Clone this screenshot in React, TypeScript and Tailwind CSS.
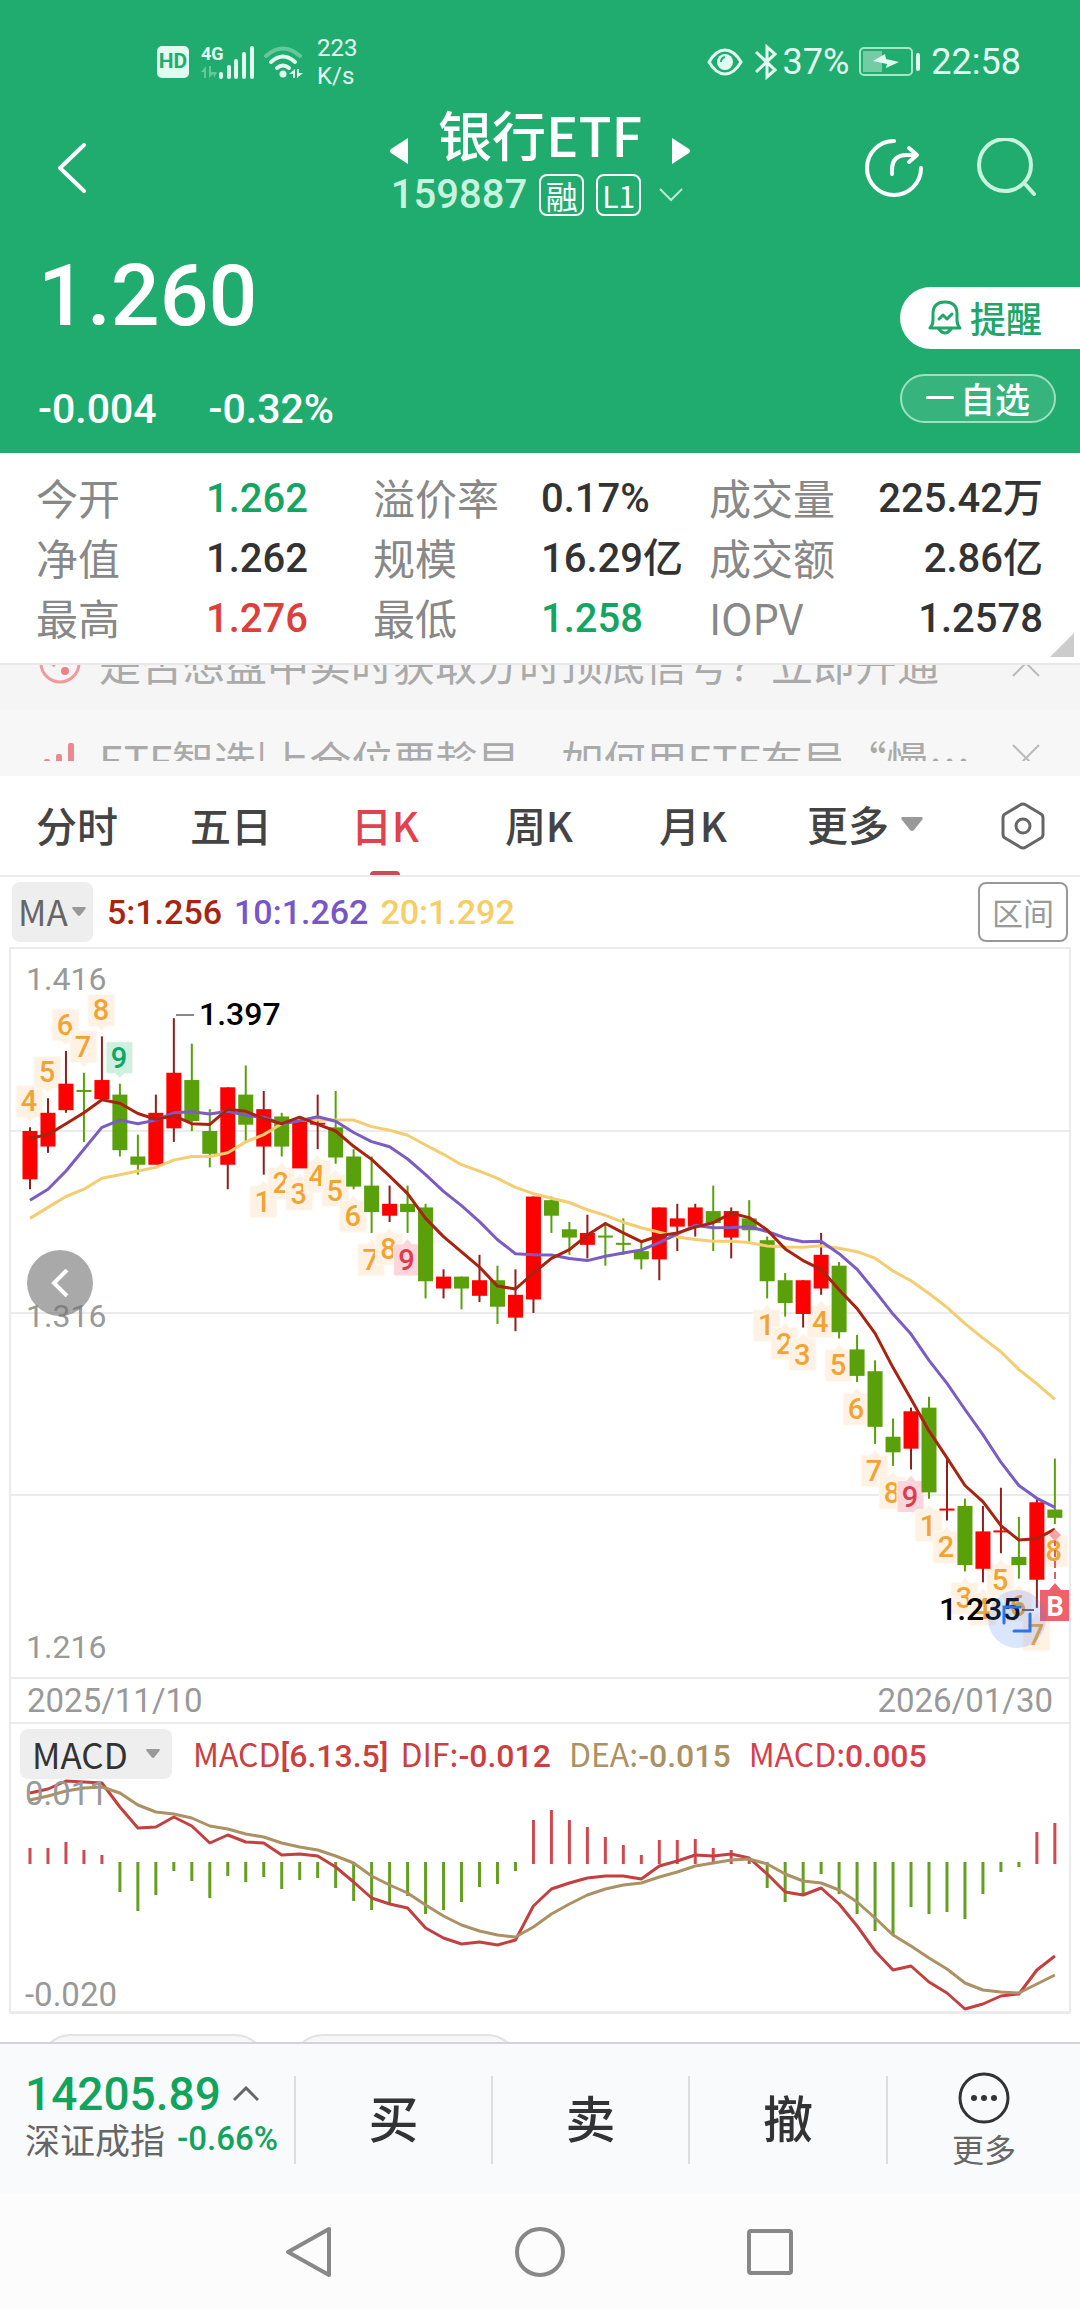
import { useState } from 'react'
import clsx from 'clsx'

const NUM = "font-['Roboto','Noto_Sans_CJK_SC',sans-serif] font-medium"

const RISE = '#ff0000'
const FALL = '#5aa00a'
const RISE_WICK = '#8f1f1f'

const PLOT_W = 1058
const PLOT_H = 728
const TOP_PRICE = 1416
const PX_PER_TICK = 3.64

// [high, body top, body bottom, low, rising] in thousandths
type Candle = [number, number, number, number, 0 | 1]

const CANDLES: Candle[] = [
  [1367, 1366, 1353, 1350, 1],
  [1375, 1371, 1362, 1360, 1],
  [1388, 1379, 1372, 1371, 1],
  [1382, 1377, 1377, 1363, 0],
  [1392, 1380, 1375, 1375, 1],
  [1379, 1376, 1361, 1359, 0],
  [1365, 1359, 1357, 1354, 0],
  [1376, 1371, 1357, 1357, 1],
  [1397, 1382, 1367, 1363, 1],
  [1390, 1380, 1369, 1366, 0],
  [1372, 1366, 1360, 1356, 0],
  [1378, 1378, 1357, 1350, 1],
  [1384, 1376, 1368, 1363, 0],
  [1377, 1372, 1362, 1354, 1],
  [1371, 1370, 1362, 1359, 0],
  [1370, 1369, 1356, 1356, 1],
  [1376, 1368, 1368, 1361, 1],
  [1377, 1367, 1359, 1357, 0],
  [1361, 1359, 1351, 1350, 0],
  [1359, 1351, 1344, 1338, 0],
  [1351, 1346, 1343, 1341, 1],
  [1351, 1346, 1344, 1338, 0],
  [1346, 1345, 1325, 1320, 0],
  [1328, 1326, 1323, 1320, 1],
  [1326, 1326, 1323, 1317, 0],
  [1332, 1325, 1321, 1319, 1],
  [1329, 1325, 1318, 1313, 0],
  [1328, 1321, 1315, 1311, 1],
  [1348, 1348, 1320, 1316, 1],
  [1348, 1347, 1343, 1338, 0],
  [1341, 1339, 1337, 1332, 0],
  [1343, 1338, 1335, 1331, 1],
  [1341, 1337, 1337, 1329, 0],
  [1342, 1335, 1335, 1332, 0],
  [1336, 1333, 1331, 1328, 0],
  [1345, 1345, 1331, 1325, 1],
  [1346, 1342, 1340, 1333, 1],
  [1346, 1345, 1340, 1337, 1],
  [1351, 1344, 1341, 1333, 0],
  [1345, 1344, 1337, 1331, 1],
  [1347, 1342, 1339, 1335, 0],
  [1337, 1336, 1325, 1320, 0],
  [1327, 1325, 1319, 1315, 0],
  [1325, 1325, 1316, 1312, 1],
  [1338, 1332, 1323, 1321, 1],
  [1330, 1329, 1311, 1309, 0],
  [1310, 1306, 1299, 1297, 0],
  [1303, 1300, 1285, 1280, 0],
  [1287, 1282, 1278, 1274, 0],
  [1290, 1289, 1279, 1273, 1],
  [1293, 1290, 1267, 1265, 0],
  [1276, 1262, 1262, 1259, 1],
  [1265, 1263, 1247, 1245, 0],
  [1263, 1256, 1246, 1242, 1],
  [1268, 1256, 1256, 1250, 1],
  [1260, 1249, 1247, 1243, 0],
  [1265, 1264, 1243, 1235, 1],
  [1276, 1262, 1260, 1258, 0],
]

// averages for the days whose window starts before the first candle
const MA5_LEAD = [1364, 1365, 1368, 1371]
const MA10_LEAD = [1347, 1350, 1355, 1361, 1367, 1369, 1368, 1369, 1371]
const MA20_LEAD = [
  1342, 1345, 1348, 1350, 1353, 1354, 1355, 1356, 1358, 1359, 1359, 1360, 1363, 1365, 1368, 1369, 1369, 1369, 1369,
]

// nine-turn markers: candle index and label
const TAGS_ABOVE: [number, string][] = [[0, '4'], [1, '5'], [2, '6'], [3, '7'], [4, '8'], [5, '9']]
const TAGS_BELOW: [number, string][] = [
  [13, '1'], [14, '2'], [15, '3'], [16, '4'], [17, '5'], [18, '6'], [19, '7'], [20, '8'], [21, '9'],
  [41, '1'], [42, '2'], [43, '3'], [44, '4'], [45, '5'], [46, '6'], [47, '7'], [48, '8'], [49, '9'],
  [50, '1'], [51, '2'], [52, '3'], [53, '4'], [54, '5'], [55, '6'], [56, '7'], [57, '8'],
]

const DIF = [
  69, 65, 57, 58, 59, 83, 104, 103, 93, 102, 119, 111, 118, 119, 131, 130, 132, 143, 158, 174, 180, 184, 204, 214, 220,
  218, 221, 216, 182, 165, 159, 154, 152, 152, 155, 142, 137, 131, 132, 130, 134, 150, 168, 171, 164, 180, 202, 227,
  246, 242, 258, 269, 285, 280, 272, 270, 246, 232,
]
const DEA = [
  76, 72, 67, 64, 63, 69, 81, 88, 90, 94, 102, 105, 110, 113, 119, 123, 126, 132, 139, 152, 161, 169, 181, 192, 201,
  207, 211, 213, 203, 190, 180, 171, 165, 161, 159, 153, 148, 142, 139, 136, 135, 140, 150, 157, 159, 166, 178, 194,
  211, 222, 234, 245, 259, 266, 268, 269, 260, 251,
]
const HIST = [
  15, 15, 21, 13, 8, -29, -48, -32, -8, -18, -35, -13, -19, -14, -26, -17, -15, -25, -38, -47, -41, -33, -51, -47, -39,
  -24, -21, -8, 43, 53, 43, 36, 26, 18, 8, 23, 23, 24, 15, 13, 5, -25, -39, -32, -11, -31, -51, -68, -72, -44, -51,
  -49, -56, -31, -9, -4, 31, 40,
]
const HIST_ZERO = 139

const xAt = (i: number) => 19 + i * 17.98
const yAt = (price: number) => (TOP_PRICE - price) * PX_PER_TICK

const closes = CANDLES.map(([, top, bottom, , rising]) => (rising ? top : bottom))

function movingAverage(size: number, lead: number[]): number[] {
  return closes.map((_, i) => {
    if (i < size - 1) return lead[i]
    const part = closes.slice(i - size + 1, i + 1)
    return part.reduce((a, b) => a + b, 0) / size
  })
}

const toPoints = (ys: number[]) => ys.map((y, i) => `${xAt(i).toFixed(1)},${y.toFixed(1)}`).join(' ')

function Tag({ index, label, above }: { index: number; label: string; above?: boolean }) {
  const x = xAt(index)
  const [high, , , low] = CANDLES[index]
  const top = above ? yAt(high) - 42 : yAt(low) + 11
  const nine = label === '9'
  const fill = nine ? (above ? '#cdf0e0' : '#ffd5db') : '#fff2e4'
  const color = nine ? (above ? '#12a463' : '#dc3c50') : '#f0a436'
  const tip = above
    ? `M${x - 5} ${top + 31}l5 5l5 -5z`
    : `M${x - 5} ${top + 1}l5 -6l5 6z`
  return (
    <g>
      <rect x={x - 14} y={top} width="27" height="32" rx="2" fill={fill} stroke="#fffaf5" />
      <path d={tip} fill={fill} />
      <text x={x - 1} y={top + 26} fontSize="29" textAnchor="middle" fill={color}>
        {label}
      </text>
    </g>
  )
}

function KlineChart() {
  return (
    <svg viewBox={`0 0 ${PLOT_W} ${PLOT_H}`} className={clsx(NUM, 'block h-auto w-full')} role="img" aria-label="日K线图">
      {[182, 364, 546].map((y) => (
        <line key={y} x1="0" x2={PLOT_W} y1={y} y2={y} stroke="#ebebeb" strokeWidth="2" />
      ))}
      <g fontSize="32" fontWeight="400" fill="#999">
        <text x="15" y="41">1.416</text>
        <text x="15" y="378">1.316</text>
        <text x="15" y="709">1.216</text>
      </g>
      {TAGS_ABOVE.map(([i, label]) => (
        <Tag key={i} index={i} label={label} above />
      ))}
      {TAGS_BELOW.map(([i, label]) => (
        <Tag key={i} index={i} label={label} />
      ))}
      {CANDLES.map(([high, top, bottom, low, rising], i) => {
        const x = xAt(i)
        const doji = top === bottom
        return (
          <g key={i}>
            <line x1={x} x2={x} y1={yAt(high)} y2={yAt(low)} stroke={rising ? RISE_WICK : FALL} strokeWidth="2" />
            <rect
              x={x - 7.5}
              y={yAt(top) - (doji ? 1 : 0)}
              width="15"
              height={doji ? 2 : yAt(bottom) - yAt(top) + 1}
              fill={rising ? RISE : FALL}
            />
          </g>
        )
      })}
      <g fill="none" strokeWidth="3" strokeLinejoin="round">
        <polyline points={toPoints(movingAverage(20, MA20_LEAD).map(yAt))} stroke="#f3cd70" />
        <polyline points={toPoints(movingAverage(10, MA10_LEAD).map(yAt))} stroke="#7a5cc4" />
        <polyline points={toPoints(movingAverage(5, MA5_LEAD).map(yAt))} stroke="#a82410" />
      </g>
      <line x1="165" x2="183" y1="66" y2="66" stroke="#888" strokeWidth="2" />
      <text x="188" y="76" fontSize="32" fill="#000">1.397</text>
      <line x1="1011" x2="1023" y1="661" y2="661" stroke="#666" strokeWidth="2" />
      <text x="928" y="671" fontSize="32" fill="#000">1.235</text>
      <line x1="1044" x2="1044" y1="590" y2="632" stroke="#d8606c" strokeWidth="2" strokeDasharray="7 4" />
      <path d="M1044 580l6 6l-6 6l-6 -6z" fill="#f3a5a5" />
      <path d="M1029 641h9l6 -7l6 7h8v31h-29z" fill="#f0606a" />
      <text x="1044" y="667" fontSize="27" fontWeight="700" textAnchor="middle" fill="#fff">B</text>
    </svg>
  )
}

function MacdChart() {
  return (
    <svg viewBox={`0 0 ${PLOT_W} 287`} className={clsx(NUM, 'block h-auto w-full')} role="img" aria-label="MACD">
      {HIST.map((h, i) => (
        <line
          key={i}
          x1={xAt(i)}
          x2={xAt(i)}
          y1={h > 0 ? HIST_ZERO + 1 : HIST_ZERO - 1}
          y2={HIST_ZERO - h}
          stroke={h > 0 ? '#cf4a50' : '#649f22'}
          strokeWidth="3"
        />
      ))}
      <g fill="none" strokeWidth="3" strokeLinejoin="round">
        <polyline points={toPoints(DIF)} stroke="#c2403f" />
        <polyline points={toPoints(DEA)} stroke="#ab9163" />
      </g>
      <g fontSize="33" fontWeight="400" fill="#999">
        <text x="14" y="81">0.011</text>
        <text x="14" y="282">-0.020</text>
      </g>
    </svg>
  )
}

function Caret({ className }: { className: string }) {
  return (
    <svg viewBox="0 0 22 14" className={className} fill="#999" aria-hidden="true">
      <path d="M2 0h18q3 0 1 3l-8 10q-2 2 -4 0l-8 -10q-2 -3 1 -3z" />
    </svg>
  )
}

function StatusBar() {
  return (
    <div className="flex h-[92px] items-center justify-between pt-8 pr-[59px] pl-[157px] font-['Roboto',sans-serif] text-[#e2fbf0]">
      <div className="flex items-center">
        <div className="flex h-8 w-8 items-center justify-center rounded-[5px] bg-[#e2fbf0] text-[21px] font-bold text-[#21ac6f]">
          HD
        </div>
        <svg viewBox="0 0 54 34" className="ml-3 h-[34px] w-[54px] overflow-visible" fill="#e2fbf0" aria-hidden="true">
          <text x="0" y="15" fontSize="18" fontWeight="700">4G</text>
          <path d="M0 27l5 -6v12h-2v-6zM8 21h2v6h4l-6 6zM12 27h4l-3 6z" opacity=".35" />
          <rect x="18" y="27" width="4" height="7" rx="2" />
          <rect x="26" y="20" width="4" height="14" rx="2" />
          <rect x="33" y="14" width="4" height="20" rx="2" />
          <rect x="41" y="7" width="4" height="27" rx="2" />
          <rect x="49" y="1" width="4" height="33" rx="2" />
        </svg>
        <svg viewBox="0 0 40 34" className="ml-2 h-[34px] w-10" fill="none" stroke="#e2fbf0" strokeWidth="4" strokeLinecap="round" aria-hidden="true">
          <path d="M3 11q17 -15 34 0" opacity=".35" />
          <path d="M8 17q12 -11 24 0" />
          <path d="M14 23q6 -5 12 0" />
          <circle cx="20" cy="29" r="3.5" fill="#e2fbf0" stroke="none" />
          <path d="M26 29l6 -5v9h-2v-4zM34 24v9l6 -5h-4v-4z" fill="#e2fbf0" stroke="none" />
        </svg>
        <div className="ml-[14px] text-2xl leading-7">
          <div>223</div>
          <div>K/s</div>
        </div>
      </div>
      <div className="flex items-center text-[36px] leading-none">
        <svg viewBox="0 0 36 28" className="h-7 w-9" fill="none" stroke="#e2fbf0" strokeWidth="3" aria-hidden="true">
          <path d="M2 14q7 -12 16 -12t16 12q-7 12 -16 12t-16 -12z" />
          <circle cx="18" cy="14" r="8" fill="#e2fbf0" stroke="none" />
          <path d="M14 14q0 -4 4 -5" stroke="#21ac6f" strokeWidth="2" />
        </svg>
        <svg viewBox="0 0 22 36" className="ml-3 h-9 w-[22px]" fill="none" stroke="#e2fbf0" strokeWidth="3" aria-hidden="true">
          <path d="M1 8l19 18l-8 7v-30l8 7l-19 18" />
        </svg>
        <span className="ml-[6px]">37%</span>
        <svg viewBox="0 0 62 30" className="ml-[10px] h-[30px] w-[62px]" aria-hidden="true">
          <rect x="1" y="1" width="52" height="27" rx="4" fill="none" stroke="#a5e5c8" strokeWidth="2" />
          <rect x="4" y="4" width="19" height="21" fill="#75cba4" />
          <path d="M14 14l14 3l-1 4l13 -6l-13 -3l-1 -5z" fill="#e2fbf0" />
          <rect x="57" y="6" width="4" height="18" rx="2" fill="#e2fbf0" />
        </svg>
        <span className="ml-[10px]">22:58</span>
      </div>
    </div>
  )
}

function Header() {
  return (
    <header className="grid grid-cols-[1fr_auto_1fr] items-center pt-[11px] text-white">
      <button type="button" aria-label="返回" className="mt-[17px] ml-14 w-8">
        <svg viewBox="0 0 32 52" className="h-[52px] w-8" fill="none" stroke="#fff" strokeWidth="4" strokeLinecap="round" strokeLinejoin="round">
          <path d="M28 3l-24 23l24 23" />
        </svg>
      </button>
      <div>
        <div className="flex h-16 items-end justify-center gap-[30px]">
          <button type="button" aria-label="上一只" className="mb-[3px]">
            <svg viewBox="0 0 18 26" className="h-[26px] w-[18px]" fill="#fff"><path d="M18 0v26l-17 -11q-2 -2 0 -4z" /></svg>
          </button>
          <h1 className="text-[54px] leading-[66px] font-medium">银行ETF</h1>
          <button type="button" aria-label="下一只" className="mb-[3px]">
            <svg viewBox="0 0 18 26" className="h-[26px] w-[18px]" fill="#fff"><path d="M0 0v26l17 -11q2 -2 0 -4z" /></svg>
          </button>
        </div>
        <div className="mt-[7px] flex items-center justify-center pr-[6px]">
          <span className={clsx(NUM, 'text-[40px] leading-[42px] text-[#c8f3de]')}>159887</span>
          <span className="ml-3 flex h-[42px] w-[45px] items-center justify-center rounded-lg border-2 border-white text-[32px] leading-none">
            融
          </span>
          <span className="ml-3 flex h-[42px] w-[45px] items-center justify-center rounded-lg border-2 border-white text-[30px] leading-none">
            L1
          </span>
          <svg viewBox="0 0 24 14" className="ml-[18px] h-[14px] w-6" fill="none" stroke="#b5ecd2" strokeWidth="2" aria-hidden="true">
            <path d="M1 1l11 11l11 -11" />
          </svg>
        </div>
      </div>
      <div className="mt-[17px] flex justify-end gap-[52px] pr-11">
        <button type="button" aria-label="分享">
          <svg viewBox="0 0 60 60" className="h-[60px] w-[60px]" fill="none" stroke="#fff" strokeWidth="4" strokeLinecap="round" strokeLinejoin="round">
            <path d="M30 3a27 27 0 1 0 27 27" />
            <path d="M28 36v-4q0 -15 15 -15h9M45 10l8 7l-8 7" />
          </svg>
        </button>
        <button type="button" aria-label="搜索">
          <svg viewBox="0 0 60 60" className="h-[60px] w-[60px]" fill="none" stroke="#c8f3de" strokeWidth="4" strokeLinecap="round">
            <circle cx="29" cy="27" r="26" />
            <path d="M50 47l8 9" />
          </svg>
        </button>
      </div>
    </header>
  )
}

function PricePanel() {
  return (
    <section className="flex justify-between pb-6 text-white">
      <div className={clsx(NUM, 'pt-9 pl-[38px]')}>
        <div className="text-[86px] leading-[88px]">1.260</div>
        <div className="mt-[49px] flex gap-[52px] text-[41px] leading-10">
          <span>-0.004</span>
          <span>-0.32%</span>
        </div>
      </div>
      <div className="flex w-[180px] flex-col items-start pt-[71px]">
        <button type="button" className="flex h-[62px] w-full items-center gap-2 rounded-l-full bg-white pb-[2px] pl-7 text-[36px] leading-none font-medium text-[#21a569]">
          <svg viewBox="0 0 34 36" className="h-9 w-[34px]" fill="none" stroke="#21a569" strokeWidth="3" strokeLinecap="round" strokeLinejoin="round" aria-hidden="true">
            <path d="M2 29h30q-3 -3 -3 -8v-6q0 -12 -12 -12t-12 12v6q0 5 -3 8z" />
            <path d="M11 30q6 8 12 0M11 20l4 -4l4 4l5 -5" />
          </svg>
          提醒
        </button>
        <button type="button" className="mt-[25px] flex h-[49px] w-[156px] items-center justify-center gap-[6px] rounded-full border-2 border-[#9be0c0] bg-white/10 pb-[3px] text-[35px] leading-none font-medium">
          <span className="h-[3px] w-7 rounded-full bg-white" />
          自选
        </button>
      </div>
    </section>
  )
}

const STATS: { label: string; value: string; color?: string; end?: boolean }[] = [
  { label: '今开', value: '1.262', color: 'text-[#14a562]' },
  { label: '溢价率', value: '0.17%' },
  { label: '成交量', value: '225.42万', end: true },
  { label: '净值', value: '1.262' },
  { label: '规模', value: '16.29亿' },
  { label: '成交额', value: '2.86亿', end: true },
  { label: '最高', value: '1.276', color: 'text-[#dc3f3c]' },
  { label: '最低', value: '1.258', color: 'text-[#14a562]' },
  { label: 'IOPV', value: '1.2578', end: true },
]

function Stats() {
  return (
    <section className="relative border-b-2 border-[#e8e8e8] py-[15px] pr-[37px] pl-9">
      <dl className="grid grid-cols-[170fr_167fr_168fr_168fr_134fr_200fr] text-[42px] whitespace-nowrap">
        {STATS.map(({ label, value, color, end }) => (
          <div key={label} className="contents">
            <dt className="h-[60px] leading-[58px] text-[#888]">{label}</dt>
            <dd className={clsx(NUM, 'h-[60px] text-[40px] leading-[62px]', color ?? 'text-[#333]', end && 'text-right')}>
              {value}
            </dd>
          </div>
        ))}
      </dl>
      <svg viewBox="0 0 24 24" className="absolute right-[6px] bottom-[6px] h-6 w-6" fill="#ccc" aria-hidden="true">
        <path d="M24 0v24h-24z" />
      </svg>
    </section>
  )
}

function CloseIcon() {
  return (
    <svg viewBox="0 0 28 28" className="h-7 w-7" fill="none" stroke="#bbb" strokeWidth="2">
      <path d="M1 1l26 26M27 1l-26 26" />
    </svg>
  )
}

function Notices() {
  return (
    <section className="bg-[#f7f7f7] text-[42px] leading-[42px] whitespace-nowrap text-[#aaa]">
      <div className="flex h-[45px] items-end overflow-hidden bg-[#f5f5f5] pr-10 pb-[26px] pl-[39px]">
        <svg viewBox="0 0 42 42" className="h-[42px] w-[42px] shrink-0" fill="none" stroke="#ef9a9f" strokeWidth="3" aria-hidden="true">
          <circle cx="21" cy="21" r="19" />
          <circle cx="26" cy="29" r="4" fill="#e98389" stroke="none" />
          <path d="M12 21l4 3" />
        </svg>
        <a href="#signal" className="ml-[18px] flex-1">是否想盘中实时获取分时顶底信号？立即开通</a>
        <button type="button" aria-label="关闭信号提示" className="mb-[7px]">
          <CloseIcon />
        </button>
      </div>
      <div className="pt-7 pb-[15px]">
        <div className="flex h-[23px] items-start overflow-hidden pr-10 pl-[39px]">
          <svg viewBox="0 0 42 42" className="h-[42px] w-[42px] shrink-0" fill="#ea8a90" aria-hidden="true">
            <rect x="5" y="21" width="6" height="20" rx="2" />
            <rect x="17" y="16" width="6" height="24" rx="2" />
            <rect x="29" y="5" width="6" height="36" rx="2" />
          </svg>
          <a href="#picks" className="ml-[18px] flex-1">ETF智选|上仓位要趁早，如何用ETF布局“慢…</a>
          <button type="button" aria-label="关闭智选提示" className="mt-[6px]">
            <CloseIcon />
          </button>
        </div>
      </div>
    </section>
  )
}

const PERIODS = ['分时', '五日', '日K', '周K', '月K']

function PeriodTabs() {
  const [period, setPeriod] = useState('日K')
  return (
    <nav className="grid h-[101px] grid-cols-[154fr_154fr_154fr_154fr_154fr_310fr] border-b-2 border-[#ebebeb] text-[41px] leading-none font-medium text-[#444]">
      {PERIODS.map((p) => (
        <button
          key={p}
          type="button"
          onClick={() => setPeriod(p)}
          className={clsx('flex flex-col items-center justify-between pt-7', p === period && 'text-[#e0424e]')}
        >
          {p}
          {p === period ? <span className="h-1 w-[30px] rounded-t-sm bg-[#cf4a55]" /> : null}
        </button>
      ))}
      <div className="flex items-center justify-between pr-[33px] pl-[37px]">
        <button type="button" className="flex items-center gap-3 pb-1">
          更多
          <Caret className="h-[14px] w-[22px]" />
        </button>
        <button type="button" aria-label="设置">
          <svg viewBox="0 0 48 48" className="h-12 w-12" fill="none" stroke="#666" strokeWidth="3" strokeLinejoin="round">
            <path d="M21 3q3 -2 6 0l15 9q2 1 2 4v16q0 3 -2 4l-15 9q-3 2 -6 0l-15 -9q-2 -1 -2 -4v-16q0 -3 2 -4z" />
            <circle cx="24" cy="24" r="7" />
          </svg>
        </button>
      </div>
    </nav>
  )
}

function MaRow() {
  return (
    <div className="flex items-center px-3 py-[5px]">
      <div className="relative">
        <select aria-label="主图指标" className="h-[60px] w-[81px] appearance-none rounded-lg bg-[#eee] pb-[2px] pl-[6px] text-[35px] text-[#666]">
          <option>MA</option>
        </select>
        <Caret className="pointer-events-none absolute top-[25px] right-[7px] h-[9px] w-[14px]" />
      </div>
      <div className={clsx(NUM, 'ml-[14px] flex flex-1 gap-3 text-[34px] leading-none')}>
        <span className="text-[#a82410]">5:1.256</span>
        <span className="text-[#7757c8]">10:1.262</span>
        <span className="text-[#f7cd65]">20:1.292</span>
      </div>
      <button type="button" className="h-[60px] w-[90px] rounded-lg border-2 border-[#999] pb-[2px] text-[31px] leading-none text-[#999]">
        区间
      </button>
    </div>
  )
}

function ChartPanel() {
  return (
    <div className="mx-[9px] border-2 border-b-[3px] border-[#ebebeb]">
      <div className="relative">
        <KlineChart />
        <button type="button" aria-label="更早" className="absolute top-[301px] left-4 flex h-[66px] w-[66px] items-center justify-center rounded-full bg-[#707070]/60">
          <svg viewBox="0 0 18 28" className="h-7 w-[18px]" fill="none" stroke="#fff" strokeWidth="4"><path d="M16 1l-13 13l13 13" /></svg>
        </button>
        <button type="button" aria-label="全屏" className="absolute right-[23px] bottom-[29px] flex h-[58px] w-[58px] items-center justify-center rounded-full bg-[#4880f0]/20">
          <svg viewBox="0 0 30 28" className="h-7 w-[30px]" fill="none" stroke="#2f74e8" strokeWidth="3" strokeLinecap="round">
            <path d="M2 18v-16h16M28 9v17h-16" />
          </svg>
        </button>
      </div>
      <div className="flex h-[47px] items-center justify-between border-y-2 border-[#ebebeb] px-4 font-['Roboto',sans-serif] text-[33px] leading-none text-[#999]">
        <time>2025/11/10</time>
        <time>2026/01/30</time>
      </div>
      <div className="relative">
        <MacdChart />
        <div className="absolute inset-x-0 top-[5px] flex items-center pl-[9px] text-[32px] leading-none whitespace-nowrap">
          <div className="relative">
            <select aria-label="副图指标" className="h-[50px] w-[152px] appearance-none rounded-lg bg-[#eee] pb-[2px] pl-3 text-[35px] text-[#333]">
              <option>MACD</option>
            </select>
            <Caret className="pointer-events-none absolute top-5 right-3 h-[9px] w-[14px]" />
          </div>
          <span className="ml-[21px] text-[#cb3f3f]">MACD<b className={NUM}>[6.13.5]</b></span>
          <span className="ml-3 text-[#cb3f3f]">DIF:<b className={NUM}>-0.012</b></span>
          <span className="ml-[18px] text-[#ab9163]">DEA:<b className={NUM}>-0.015</b></span>
          <span className="ml-[18px] text-[#d6404c]">MACD:<b className={NUM}>0.005</b></span>
        </div>
      </div>
    </div>
  )
}

function TradeBar() {
  return (
    <footer className="grid h-[151px] grid-cols-[294fr_197fr_197fr_198fr_194fr] border-t-2 border-[#d4d4d8] bg-[#f9fafc]">
      <button type="button" className="flex flex-col items-start pt-[26px] pl-[25px] whitespace-nowrap">
        <span className={clsx(NUM, 'flex items-center gap-3 text-[46px] leading-[48px] text-[#12a35d]')}>
          14205.89
          <svg viewBox="0 0 26 16" className="h-4 w-[26px]" fill="none" stroke="#666" strokeWidth="3" aria-hidden="true">
            <path d="M1 14l12 -12l12 12" />
          </svg>
        </span>
        <span className="flex items-center gap-3 text-[35px] leading-[42px] text-[#666]">
          深证成指
          <span className={clsx(NUM, 'text-[33px] text-[#12a35d]')}>-0.66%</span>
        </span>
      </button>
      {['买', '卖', '撤'].map((action) => (
        <button
          key={action}
          type="button"
          className="mt-8 mb-[34px] border-l-2 border-[#dcdde0] pb-2 text-[50px] leading-none font-medium text-[#333]"
        >
          {action}
        </button>
      ))}
      <button type="button" className="mt-8 mb-[34px] flex flex-col items-center border-l-2 border-[#dcdde0] text-[32px] leading-none text-[#666]">
        <svg viewBox="0 0 52 52" className="-mt-1 h-[52px] w-[52px] shrink-0" fill="none" stroke="#333" strokeWidth="3" aria-hidden="true">
          <circle cx="26" cy="26" r="24" />
          <g fill="#333" stroke="none">
            <circle cx="16" cy="26" r="3" />
            <circle cx="26" cy="26" r="3" />
            <circle cx="36" cy="26" r="3" />
          </g>
        </svg>
        <span className="mt-2">更多</span>
      </button>
    </footer>
  )
}

function SystemNav() {
  return (
    <div className="flex h-[117px] items-center justify-center gap-[178px] bg-[#fcfcfc]">
      <button type="button" aria-label="系统返回">
        <svg viewBox="0 0 52 52" className="h-[52px] w-[52px]" fill="none" stroke="#888" strokeWidth="4" strokeLinejoin="round">
          <path d="M45 3v46l-41 -23z" />
        </svg>
      </button>
      <button type="button" aria-label="主屏幕">
        <svg viewBox="0 0 52 52" className="h-[52px] w-[52px]" fill="none" stroke="#888" strokeWidth="4">
          <circle cx="26" cy="26" r="23" />
        </svg>
      </button>
      <button type="button" aria-label="最近任务">
        <svg viewBox="0 0 52 52" className="h-[52px] w-[52px]" fill="none" stroke="#888" strokeWidth="4">
          <rect x="5" y="5" width="42" height="42" rx="2" />
        </svg>
      </button>
    </div>
  )
}

export default function App() {
  return (
    <div className="min-h-screen bg-white font-['Noto_Sans_CJK_SC',sans-serif]">
      <div className="bg-[#21ac6f]">
        <StatusBar />
        <Header />
        <PricePanel />
      </div>
      <main>
        <Stats />
        <Notices />
        <PeriodTabs />
        <MaRow />
        <ChartPanel />
        <div className="flex h-7 items-start gap-6 overflow-hidden pt-5 pl-[39px]">
          <div className="h-16 w-[228px] shrink-0 rounded-full border-2 border-[#e2e2e5] bg-[#f7f7f8]" />
          <div className="h-16 w-[228px] shrink-0 rounded-full border-2 border-[#e2e2e5] bg-[#f7f7f8]" />
        </div>
      </main>
      <TradeBar />
      <SystemNav />
    </div>
  )
}
